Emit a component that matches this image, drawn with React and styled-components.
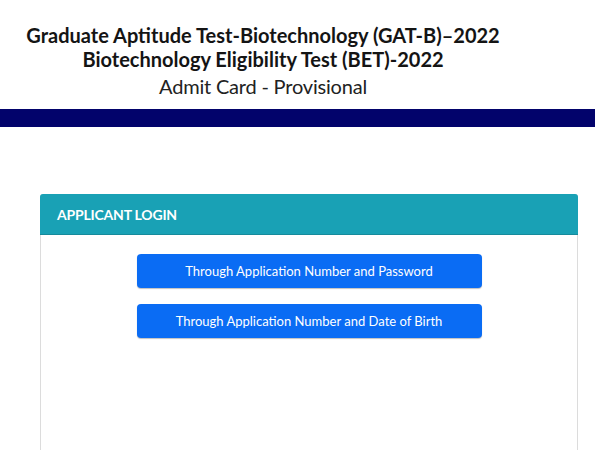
import React from "react";
import styled, { createGlobalStyle } from "styled-components";

const GlobalStyle = createGlobalStyle`
  body {
    margin: 0;
    background: #ffffff;
    font-family: "Lato", "Open Sans", sans-serif;
  }
`;

export default function App() {
  return (
    <Page>
      <GlobalStyle />
      <Header>
        <Titles>
          <MainTitle>Graduate Aptitude Test-Biotechnology (GAT-B)–2022</MainTitle>
          <MainTitle>Biotechnology Eligibility Test (BET)-2022</MainTitle>
          <SubTitle>Admit Card - Provisional</SubTitle>
        </Titles>
      </Header>
      <NavBar />
      <Card>
        <CardHeader>APPLICANT LOGIN</CardHeader>
        <CardBody>
          <LoginButton type="button">Through Application Number and Password</LoginButton>
          <LoginButton type="button">Through Application Number and Date of Birth</LoginButton>
        </CardBody>
      </Card>
    </Page>
  );
}

const Page = styled.div`
  width: 600px;
  height: 450px;
  overflow: hidden;
`;

const Header = styled.header`
  height: 109px;
  box-sizing: border-box;
  padding-top: 23px;
`;

const Titles = styled.div`
  width: 526px;
  display: flex;
  flex-direction: column;
  align-items: center;
  color: #141414;
`;

const MainTitle = styled.h1`
  margin: 0;
  font-size: 20px;
  line-height: 24px;
  font-weight: 700;
`;

const SubTitle = styled.h2`
  margin: 3px 0 0;
  font-size: 20px;
  line-height: 24px;
  font-weight: 400;
  letter-spacing: -0.2px;
  color: #222222;
`;

const NavBar = styled.div`
  width: 595px;
  height: 18px;
  background: #02036b;
`;

const Card = styled.section`
  margin: 67px 0 0 40px;
  width: 538px;
  height: 320px;
  display: flex;
  flex-direction: column;
  border: 1px solid #dcdcdc;
  border-radius: 3px 3px 0 0;
  box-sizing: border-box;
`;

const CardHeader = styled.div`
  height: 40px;
  margin: -1px -1px 0;
  padding-left: 17px;
  display: flex;
  align-items: center;
  background: #19a1b5;
  border-bottom: 1px solid #168a9b;
  border-radius: 3px 3px 0 0;
  color: #ffffff;
  font-size: 14px;
  font-weight: 700;
  letter-spacing: -0.2px;
`;

const CardBody = styled.div`
  display: flex;
  flex-direction: column;
  align-items: center;
  gap: 16px;
  padding-top: 19px;
`;

const LoginButton = styled.button`
  width: 345px;
  height: 34px;
  border: none;
  border-radius: 4px;
  background: #0a6cf4;
  color: #ffffff;
  font-family: "Lato", "Open Sans", sans-serif;
  font-size: 13px;
  cursor: pointer;
  box-shadow: 0 1px 1px rgba(0, 0, 0, 0.25);
`;
